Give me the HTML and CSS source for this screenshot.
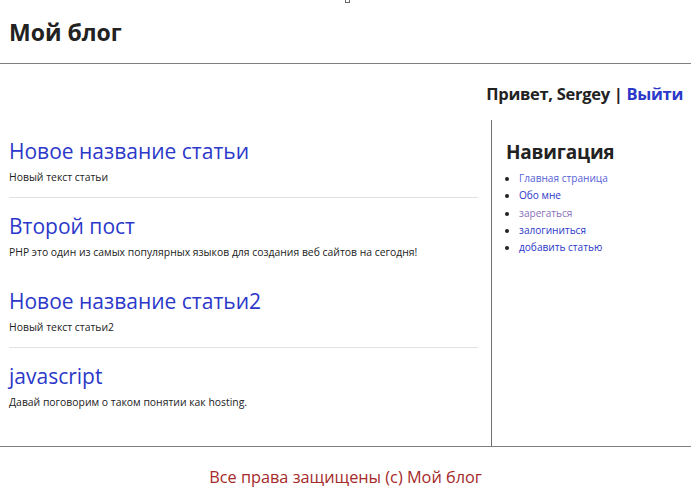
FILE: index.html
```html
<!DOCTYPE html>
<html lang="ru">
<head>
<meta charset="utf-8">
<title>Мой блог</title>
<link rel="stylesheet" href="styles.css">
</head>
<body>
<span class="top-mark"></span>
<header class="site-header">
  <h1 class="site-title">Мой блог</h1>
</header>
<div class="user-bar">Привет, Sergey | <a class="logout" href="#">Выйти</a></div>
<main class="layout">
  <section class="content">
    <article class="post post-sep">
      <h2 class="post-title"><a href="#">Новое название статьи</a></h2>
      <p class="post-text">Новый текст статьи</p>
    </article>
    <article class="post">
      <h2 class="post-title"><a href="#">Второй пост</a></h2>
      <p class="post-text">PHP это один из самых популярных языков для создания веб сайтов на сегодня!</p>
    </article>
    <article class="post post-sep">
      <h2 class="post-title"><a href="#">Новое название статьи2</a></h2>
      <p class="post-text">Новый текст статьи2</p>
    </article>
    <article class="post">
      <h2 class="post-title"><a href="#">javascript</a></h2>
      <p class="post-text">Давай поговорим о таком понятии как hosting.</p>
    </article>
  </section>
  <aside class="sidebar">
    <h2 class="nav-title">Навигация</h2>
    <ul class="nav-list">
      <li><a class="pale" href="#">Главная страница</a></li>
      <li><a href="#">Обо мне</a></li>
      <li><a class="pale pink" href="#">зарегаться</a></li>
      <li><a href="#">залогиниться</a></li>
      <li><a href="#">добавить статью</a></li>
    </ul>
  </aside>
</main>
<footer class="site-footer">Все права защищены (с) Мой блог</footer>
</body>
</html>
```
FILE: styles.css
```css
* { box-sizing: border-box; }
body {
  margin: 0;
  font-family: "Open Sans", "Noto Sans", sans-serif;
  color: #222;
  background: #fff;
  position: relative;
}
a { text-decoration: none; color: #2b38c9; }
.top-mark {
  position: absolute;
  left: 345px;
  top: -2px;
  width: 5px;
  height: 5px;
  border: 1px solid #666;
}
.site-header {
  height: 64px;
  border-bottom: 1px solid #7f7f7f;
  padding: 0 9px;
  display: flex;
  align-items: center;
}
.site-title {
  margin: 0;
  font-size: 23px;
  font-weight: 700;
  line-height: 30px;
}
.user-bar {
  height: 56px;
  padding: 18px 8px 0 0;
  text-align: right;
  font-size: 16.5px;
  font-weight: 700;
  line-height: 24px;
  letter-spacing: -0.3px;
}
.logout { color: #2b38c9; }
.layout {
  display: flex;
  border-bottom: 1px solid #7f7f7f;
}
.content {
  width: 492px;
  flex: none;
  border-right: 1px solid #6f6f6f;
  padding: 3px 13px 23px 9px;
}
.post {
  padding: 13px 0 12px;
  border-bottom: 1px solid transparent;
}
.post-sep { border-bottom-color: #e2e2e2; }
.post-title {
  margin: 0;
  font-size: 21px;
  font-weight: 400;
  line-height: 30px;
}
.post-text {
  margin: 3px 0 0;
  font-size: 10.4px;
  line-height: 16px;
}
.sidebar {
  flex: 1;
  padding: 19px 0 0 14px;
}
.nav-title {
  margin: 0;
  font-size: 19px;
  font-weight: 700;
  line-height: 26px;
  letter-spacing: -0.2px;
}
.nav-list {
  margin: 5px 0 0;
  padding-left: 13px;
  font-size: 10.1px;
  line-height: 17.3px;
}
.nav-list a { color: #2b38c9; }
.nav-list a.pale { color: #5560d8; }
.nav-list a.pink { color: #8a6fb8; }
.site-footer {
  padding: 19px 0 0;
  text-align: center;
  color: #a52a2a;
  font-size: 16.3px;
  line-height: 22px;
}
```
